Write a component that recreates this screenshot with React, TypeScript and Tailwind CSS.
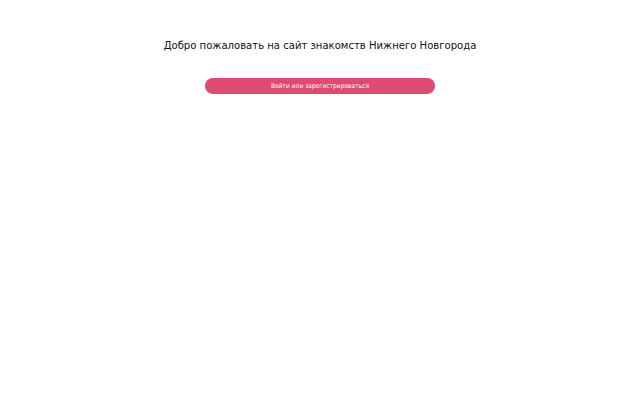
export default function App() {
  return (
    <div className="min-h-[400px] w-full bg-white flex flex-col items-center" style={{ fontFamily: '"DejaVu Sans Condensed", "DejaVu Sans", sans-serif' }}>
      <h1 className="mt-[38px] text-[11.2px] leading-[16px] text-[#111]">Добро пожаловать на сайт знакомств Нижнего Новгорода</h1>
      <button className="mt-[24px] w-[230px] h-[16px] rounded-full bg-[#df4a6f] text-white text-[6.6px] leading-[16px]">Войти или зарегистрироваться</button>
    </div>
  );
}
